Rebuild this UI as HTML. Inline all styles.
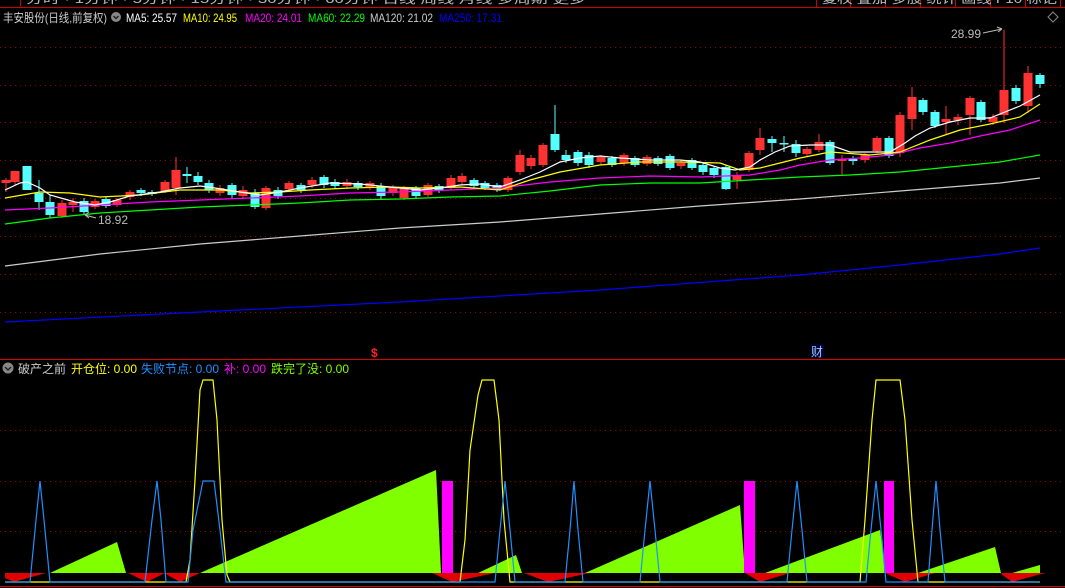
<!DOCTYPE html>
<html><head><meta charset="utf-8"><style>
html,body{margin:0;padding:0;background:#000;width:1065px;height:588px;overflow:hidden}
svg{display:block}
text{font-family:"Liberation Sans","Noto Sans CJK SC",sans-serif}
</style></head><body>
<svg id="s" width="1065" height="588" xmlns="http://www.w3.org/2000/svg">
<rect width="1065" height="588" fill="#000"/>
<!-- top toolbar -->
<line x1="0" y1="7.5" x2="1065" y2="7.5" stroke="#c00" />
<line x1="20.5" y1="0" x2="20.5" y2="7" stroke="#c00"/>
<text x="26" y="3" font-size="12" fill="#bbb" textLength="560" lengthAdjust="spacingAndGlyphs">分时 · 1分钟 · 5分钟 · 15分钟 · 30分钟 · 60分钟  日线  周线  月线  多周期  更多</text>
<g stroke="#c00"><line x1="816.5" y1="0" x2="816.5" y2="7"/><line x1="850.5" y1="0" x2="850.5" y2="7"/><line x1="885.5" y1="0" x2="885.5" y2="7"/><line x1="920.5" y1="0" x2="920.5" y2="7"/><line x1="955.5" y1="0" x2="955.5" y2="7"/><line x1="990.5" y1="0" x2="990.5" y2="7"/><line x1="1025.5" y1="0" x2="1025.5" y2="7"/><line x1="1060.5" y1="0" x2="1060.5" y2="7"/></g>
<text x="822" y="3" font-size="12" fill="#bbb" textLength="235" lengthAdjust="spacingAndGlyphs">复权  叠加  多股  统计  画线  F10  标记</text>
<!-- header -->
<text x="3" y="22" font-size="12" fill="#ccc" textLength="104" lengthAdjust="spacingAndGlyphs">丰安股份(日线,前复权)</text>
<circle cx="116" cy="17" r="5" fill="#888"/><path d="M113.5 16 L116 18.5 L118.5 16" stroke="#222" stroke-width="1.5" fill="none"/>
<text x="126" y="22" font-size="12" fill="#fff" textLength="51" lengthAdjust="spacingAndGlyphs">MA5: 25.57</text>
<text x="183" y="22" font-size="12" fill="#ff0" textLength="54" lengthAdjust="spacingAndGlyphs">MA10: 24.95</text>
<text x="245" y="22" font-size="12" fill="#f0f" textLength="57" lengthAdjust="spacingAndGlyphs">MA20: 24.01</text>
<text x="308" y="22" font-size="12" fill="#0f0" textLength="57" lengthAdjust="spacingAndGlyphs">MA60: 22.29</text>
<text x="370" y="22" font-size="12" fill="#ccc" textLength="63" lengthAdjust="spacingAndGlyphs">MA120: 21.02</text>
<text x="439" y="22" font-size="12" fill="#00f" textLength="63" lengthAdjust="spacingAndGlyphs">MA250: 17.31</text>
<path d="M1053 12 L1058 17 L1053 22 L1048 17 Z" stroke="#888" fill="none"/>
<!-- grid -->
<g stroke="#900" stroke-dasharray="1,4">
<line x1="0" y1="47.5" x2="1065" y2="47.5"/><line x1="0" y1="85.5" x2="1065" y2="85.5"/><line x1="0" y1="122.5" x2="1065" y2="122.5"/><line x1="0" y1="160.5" x2="1065" y2="160.5"/><line x1="0" y1="198.5" x2="1065" y2="198.5"/><line x1="0" y1="236.5" x2="1065" y2="236.5"/><line x1="0" y1="274.5" x2="1065" y2="274.5"/><line x1="0" y1="312.5" x2="1065" y2="312.5"/>
<line x1="0" y1="430.5" x2="1065" y2="430.5"/><line x1="0" y1="481.5" x2="1065" y2="481.5"/><line x1="0" y1="531.5" x2="1065" y2="531.5"/>
</g>
<g id="cd"></g>
<g fill="none" stroke-width="1.2">
<polyline stroke="#00f" points="5,322 200,312 400,302 600,290 800,275 900,265 1000,254 1040,248"/>
<polyline stroke="#ccc" points="5,266 100,254 200,244 300,236 400,228 500,222 600,214 700,206 800,199 900,191 1000,183 1040,178"/>
<polyline stroke="#0f0" points="5,224 50,218 100,213 150,210 200,207 250,205 300,203 350,200 400,199 450,197 500,196 550,191 600,185 650,183 700,183 750,180 800,177 850,175 900,172 950,167 1000,162 1040,155"/>
<polyline stroke="#f0f" points="5,210 50,208 100,205 150,202 200,200 250,198 300,196 350,193 400,192 450,190 500,188 550,182 600,178 650,176 700,177 750,175 780,170 800,165 830,160 860,158 890,155 920,148 950,143 980,136 1010,130 1040,120"/>
<polyline stroke="#ff0" points="5,198 40,192 70,193 100,197 140,195 180,190 220,190 250,193 280,192 310,190 350,188 390,187 420,188 460,187 500,190 530,180 560,172 600,165 640,162 680,162 720,163 740,170 760,168 780,163 800,158 830,152 870,155 900,152 930,140 960,130 990,124 1020,117 1040,104"/>
<polyline stroke="#fff" points="5,190 20,183 27,182 40,188 50,195 75,202 95,205 110,202 130,196 160,192 180,188 200,186 215,188 240,192 260,195 280,192 300,188 330,183 360,184 390,187 420,190 440,188 460,185 480,184 500,187 520,180 540,172 560,162 580,158 600,156 620,158 650,160 680,160 700,162 720,168 735,170 750,167 760,160 775,152 790,146 810,145 830,145 850,152 870,152 890,152 905,143 915,136 930,128 950,122 970,118 990,118 1005,112 1020,106 1040,95"/>
</g>
<text x="98" y="224" font-size="12" fill="#bbb">18.92</text>
<path d="M85 215 L96 218 M85 215 L89 212 M85 215 L89 218" stroke="#bbb" fill="none"/>
<text x="951" y="38" font-size="12" fill="#bbb">28.99</text>
<path d="M983 33 L1002 29 M1002 29 L997 27 M1002 29 L998 32" stroke="#bbb" fill="none"/>
<text x="371" y="357" font-size="12" fill="#f22" font-weight="bold">$</text>
<rect x="811" y="344" width="13" height="14" fill="#003"/>
<text x="811" y="356" font-size="12" fill="#9cf">财</text>
<line x1="0" y1="359.5" x2="1065" y2="359.5" stroke="#d00"/>
<!-- sub header -->
<circle cx="8" cy="368" r="5.5" fill="#888"/><path d="M5 367 L8 370 L11 367" stroke="#222" stroke-width="1.5" fill="none"/>
<text x="18" y="373" font-size="12" fill="#ccc">破产之前</text>
<text x="71" y="373" font-size="12" fill="#ff0">开仓位: 0.00</text>
<text x="141" y="373" font-size="12" fill="#1e90ff">失败节点: 0.00</text>
<text x="224" y="373" font-size="12" fill="#f0f">补: 0.00</text>
<text x="271" y="373" font-size="12" fill="#7fff00">跌完了没: 0.00</text>
<g fill="#7fff00">
<polygon points="50,573 117,542 126,573"/>
<polygon points="200,573 436,470 441,573"/>
<polygon points="478,573 516,555 522,573"/>
<polygon points="585,573 740,505 745,573"/>
<polygon points="765,573 880,530 886,573"/>
<polygon points="918,573 995,547 1001,573"/>
<polygon points="1012,573 1040,565 1040,573"/>
</g>
<g fill="#e00000">
<polygon points="5,573 46,573 14,582 5,578"/>
<polygon points="128,573 165,573 147,582"/>
<polygon points="164,573 200,573 180,582"/>
<polygon points="432,573 495,573 452,582"/>
<polygon points="524,573 590,573 548,582"/>
<polygon points="745,573 790,573 760,582"/>
<polygon points="885,573 935,573 905,582"/>
<polygon points="1000,573 1045,573 1012,582"/>
</g>
<g fill="#f0f">
<rect x="442" y="481" width="11" height="92"/>
<rect x="744" y="481" width="11" height="92"/>
<rect x="884" y="481" width="10" height="92"/>
</g>
<g fill="none" stroke-width="1.2">
<polyline stroke="#ff0" points="5,582 186,582 190,560 195,480 200,390 203,380 213,380 217,420 222,520 227,575 230,582 460,582 465,540 470,450 478,395 482,380 494,380 499,420 504,520 510,582 860,582 865,520 872,420 876,380 900,380 905,420 912,520 918,582 1040,582"/>
<polyline stroke="#1e90ff" points="5,582 30,582 36,520 40,481 44,520 50,582 145,582 152,520 157,481 161,520 166,582 188,582 193,530 203,481 214,481 220,530 226,582 495,582 500,530 505,481 510,530 515,582 565,582 570,530 574,481 578,530 583,582 640,582 645,530 650,481 655,530 660,582 787,582 792,530 797,481 802,530 807,582 866,582 871,530 876,481 881,530 886,582 928,582 932,530 936,481 940,530 945,582 1040,582"/>
</g>
<line x1="0" y1="586.5" x2="1065" y2="586.5" stroke="#d00"/>
</svg>
<script>
var d=[[6,180,183,178,192,'r'],[15,171,182,171,185,'r'],[27,166,190,166,190,'c'],[39,193,202,180,210,'c'],[50,202,215,195,218,'c'],[62,203,216,200,218,'r'],[73,202,205,198,212,'r'],[84,201,212,198,215,'c'],[95,201,207,199,209,'r'],[106,199,206,197,208,'c'],[117,200,205,198,207,'r'],[130,192,197,190,200,'r'],[141,190,193,188,196,'c'],[152,192,194,190,196,'c'],[165,182,191,180,193,'r'],[176,170,188,157,195,'r'],[187,174,176,167,183,'c'],[198,176,182,172,185,'c'],[209,183,190,180,193,'c'],[220,188,193,185,196,'r'],[232,185,195,183,198,'c'],[243,190,196,186,199,'r'],[255,193,207,189,209,'c'],[266,188,208,186,210,'r'],[278,190,196,187,199,'c'],[289,183,189,181,192,'r'],[301,185,190,183,193,'c'],[312,180,185,177,188,'r'],[324,177,185,175,188,'c'],[335,182,186,179,189,'c'],[347,182,186,179,189,'r'],[358,183,187,181,190,'c'],[370,183,187,181,190,'r'],[381,186,196,183,199,'c'],[393,187,193,185,196,'r'],[404,188,198,186,200,'r'],[416,188,196,186,198,'c'],[428,185,195,183,197,'r'],[439,186,190,184,193,'c'],[451,178,188,175,190,'r'],[462,176,182,173,185,'r'],[474,180,186,178,189,'c'],[485,183,188,181,190,'c'],[497,185,190,183,192,'c'],[508,178,190,176,192,'r'],[520,155,172,150,175,'r'],[531,158,166,155,169,'r'],[543,145,165,143,167,'r'],[555,134,150,105,152,'c'],[566,155,160,150,163,'c'],[578,152,163,150,166,'c'],[589,155,165,152,168,'c'],[601,157,162,155,165,'r'],[612,158,165,156,167,'c'],[624,155,163,153,166,'r'],[635,158,165,156,167,'c'],[647,157,164,155,166,'r'],[658,158,164,156,166,'c'],[670,156,168,154,170,'c'],[681,163,166,160,169,'r'],[692,160,168,158,170,'c'],[703,165,172,162,175,'c'],[714,168,175,166,178,'c'],[726,167,189,165,190,'c'],[737,175,180,172,189,'r'],[749,153,170,151,172,'r'],[760,138,150,128,155,'r'],[772,139,143,136,152,'c'],[784,143,144,136,152,'c'],[796,144,153,140,157,'c'],[807,149,154,147,157,'r'],[819,142,150,134,152,'r'],[830,142,163,140,165,'c'],[842,159,161,155,175,'r'],[853,159,161,156,165,'c'],[865,155,160,153,163,'r'],[877,138,151,136,153,'r'],[889,138,156,136,158,'c'],[900,115,153,112,157,'r'],[912,97,119,87,130,'r'],[923,100,112,98,115,'c'],[935,112,126,110,128,'c'],[946,119,122,106,134,'r'],[958,117,120,114,125,'r'],[970,98,115,96,135,'r'],[981,102,120,100,122,'c'],[993,117,122,114,125,'r'],[1004,90,115,30,123,'r'],[1016,88,101,85,104,'c'],[1028,73,106,66,113,'r'],[1040,75,84,73,88,'c']];
var g=document.getElementById('cd'),h='';
d.forEach(function(a){var c=a[5]=='r'?'#ff3232':'#54ffff';var bh=Math.max(a[2]-a[1],1.5);
h+='<line x1="'+a[0]+'" y1="'+a[3]+'" x2="'+a[0]+'" y2="'+a[4]+'" stroke="'+c+'" stroke-width="1"/>';
h+='<rect x="'+(a[0]-4.5)+'" y="'+a[1]+'" width="9" height="'+bh+'" fill="'+c+'"/>';});
g.innerHTML=h;
</script>
</body></html>
